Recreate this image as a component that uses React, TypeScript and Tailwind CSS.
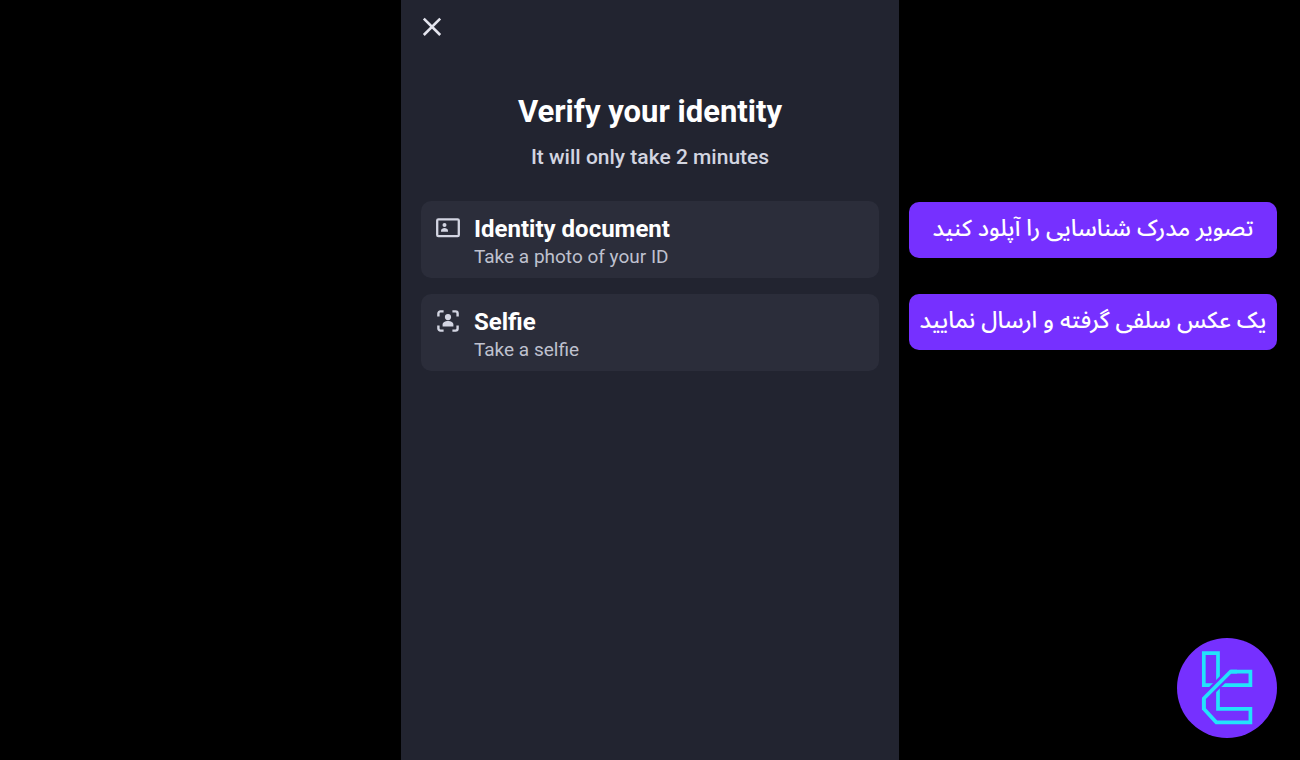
import React from "react";

function CloseIcon() {
  return (
    <svg viewBox="0 0 20 20" className="size-5" fill="none" stroke="#e4e5ee" strokeWidth="2.6" aria-hidden="true">
      <path d="M1.8 1.6 18.2 18M18.2 1.6 1.8 18" />
    </svg>
  );
}

function DocumentIcon() {
  return (
    <svg viewBox="0 0 24 24" className="size-6" fill="none" aria-hidden="true">
      <rect x="1.2" y="3.4" width="21.6" height="16.8" rx="1.2" stroke="#d3d5e2" strokeWidth="2.3" />
      <circle cx="8.5" cy="9" r="2" fill="#d3d5e2" />
      <path d="M5 15.7v-1.2c0-1.6 2-2.5 3.5-2.5s3.5.9 3.5 2.5v1.2z" fill="#d3d5e2" />
    </svg>
  );
}

function SelfieIcon() {
  return (
    <svg viewBox="0 0 24 24" className="size-6" fill="none" aria-hidden="true">
      <path
        d="M2.4 7.6V4.4a2 2 0 0 1 2-2h3.2M16.4 2.4h3.2a2 2 0 0 1 2 2v3.2M21.6 16.4v3.2a2 2 0 0 1-2 2h-3.2M7.6 21.6H4.4a2 2 0 0 1-2-2v-3.2"
        stroke="#d3d5e2"
        strokeWidth="2.4"
      />
      <circle cx="12" cy="8.1" r="3.1" fill="#d3d5e2" />
      <path d="M6.6 17.4v-1.8c0-2.2 2.6-3.6 5.4-3.6s5.4 1.4 5.4 3.6v1.8z" fill="#d3d5e2" />
    </svg>
  );
}

function BrandLogo() {
  return (
    <svg viewBox="0 0 100 100" className="size-[100px]" fill="none" role="img" aria-label="Logo">
      <circle cx="50" cy="50" r="50" fill="#7630ff" />
      <g stroke="#22e3fb" strokeWidth="3.7">
        <path d="M38 47.2H26.8V15.2h14.2V44" />
        <path d="M44 47.2h29.4V33.6H53.6" />
        <path d="M26.8 60.4v10.4L39.3 84.3h34.1V70.8H41V50" />
      </g>
      <path d="M29 58.2 51.4 35.8" stroke="#7630ff" strokeWidth="8.6" />
      <path d="M26.8 72V60.4L53.6 33.6H60" stroke="#22e3fb" strokeWidth="3.7" />
    </svg>
  );
}

function StepCard({ icon, title, text }: { icon: React.ReactNode; title: string; text: string }) {
  return (
    <button type="button" className="flex h-[77px] w-full items-start gap-[14px] rounded-[10px] bg-[#2b2d3a] px-[15px] pt-[14px] text-left">
      <span className="pt-px">{icon}</span>
      <span className="flex flex-col">
        <span className="text-[24px] leading-7 font-bold text-white">{title}</span>
        <span className="text-[19px] leading-7 text-[#bfc1cf]">{text}</span>
      </span>
    </button>
  );
}

function Note({ children }: { children: React.ReactNode }) {
  return (
    <p className="flex h-14 items-center justify-center rounded-[10px] bg-[#7630ff] pb-0.5 font-['Noto_Sans_Arabic','Noto_Sans','DejaVu_Sans',sans-serif] text-[23px] font-medium whitespace-nowrap text-white">
      {children}
    </p>
  );
}

export default function App() {
  return (
    <div className="grid min-h-screen grid-cols-[1fr_498px_1fr] bg-black font-[Roboto,sans-serif]">
      <div />
      <main className="bg-[#222430] px-5">
        <button type="button" aria-label="Close" className="mt-[17px] ml-px block">
          <CloseIcon />
        </button>
        <h1 className="mt-[55px] text-center text-[31px] leading-10 font-bold text-white">Verify your identity</h1>
        <p className="mt-[11px] text-center text-[21px] leading-7 font-medium text-[#d3d5e0]">It will only take 2 minutes</p>
        <div className="mt-[30px] flex flex-col gap-4">
          <StepCard icon={<DocumentIcon />} title="Identity document" text="Take a photo of your ID" />
          <StepCard icon={<SelfieIcon />} title="Selfie" text="Take a selfie" />
        </div>
      </main>
      <aside className="flex flex-col justify-between pt-[202px] pr-[23px] pb-[22px] pl-[10px]">
        <div dir="rtl" lang="fa" className="flex flex-col gap-9">
          <Note>تصویر مدرک شناسایی را آپلود کنید</Note>
          <Note>یک عکس سلفی گرفته و ارسال نمایید</Note>
        </div>
        <div className="flex justify-end">
          <BrandLogo />
        </div>
      </aside>
    </div>
  );
}
